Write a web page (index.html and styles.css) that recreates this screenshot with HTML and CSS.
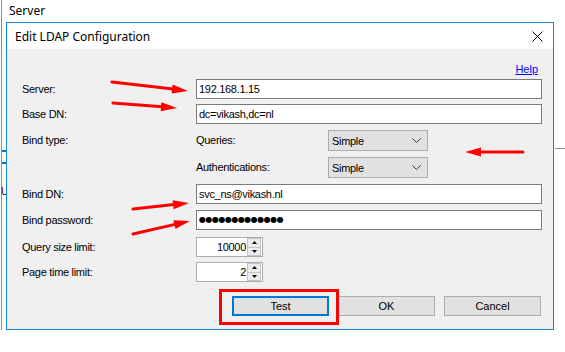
FILE: index.html
```html
<!DOCTYPE html>
<html lang="en">
<head>
  <meta charset="UTF-8" />
  <title>Edit LDAP Configuration</title>
  <link rel="stylesheet" href="styles.css">
</head>
<body>
  <div class="desk">

    <!-- window behind the dialog -->
    <div class="back-window">
      <div class="back-title">Server</div>
      <div class="back-focus"></div>
      <div class="back-letter">U</div>
    </div>
    <div class="back-rule"></div>

    <div class="dialog">
      <div class="titlebar">
        <span class="title">Edit LDAP Configuration</span>
        <svg class="close" width="11" height="11" viewBox="0 0 11 11">
          <path d="M0.5 0.5L10.5 10.5M10.5 0.5L0.5 10.5" stroke="#000" stroke-width="1" fill="none"/>
        </svg>
      </div>

      <div class="dialog-body">
        <div class="help-row"><a href="#">Help</a></div>

        <div class="form">
          <label>Server:</label>
          <div class="field">192.168.1.15</div>

          <label>Base DN:</label>
          <div class="field">dc=vikash,dc=nl</div>

          <label>Bind type:</label>
          <label class="sub">Queries:</label>
          <div class="combo">Simple
            <svg width="9" height="5" viewBox="0 0 9 5"><path d="M0.5 0.5L4.5 4.5L8.5 0.5" stroke="#333" fill="none"/></svg>
          </div>

          <label class="sub">Authentications:</label>
          <div class="combo">Simple
            <svg width="9" height="5" viewBox="0 0 9 5"><path d="M0.5 0.5L4.5 4.5L8.5 0.5" stroke="#333" fill="none"/></svg>
          </div>

          <label>Bind DN:</label>
          <div class="field">svc_ns@vikash.nl</div>

          <label>Bind password:</label>
          <div class="field password">●●●●●●●●●●●●●</div>

          <label>Query size limit:</label>
          <div class="spin">
            <span class="spin-value">10000</span>
            <span class="spin-buttons">
              <span class="spin-btn"><svg width="5" height="3" viewBox="0 0 5 3"><path d="M2.5 0L5 3H0Z" fill="#000"/></svg></span>
              <span class="spin-btn"><svg width="5" height="3" viewBox="0 0 5 3"><path d="M0 0H5L2.5 3Z" fill="#000"/></svg></span>
            </span>
          </div>

          <label>Page time limit:</label>
          <div class="spin">
            <span class="spin-value">2</span>
            <span class="spin-buttons">
              <span class="spin-btn"><svg width="5" height="3" viewBox="0 0 5 3"><path d="M2.5 0L5 3H0Z" fill="#000"/></svg></span>
              <span class="spin-btn"><svg width="5" height="3" viewBox="0 0 5 3"><path d="M0 0H5L2.5 3Z" fill="#000"/></svg></span>
            </span>
          </div>
        </div>

        <div class="buttons">
          <button class="focused">Test</button>
          <button>OK</button>
          <button>Cancel</button>
        </div>
      </div>
    </div>

    <!-- annotations drawn over the screenshot -->
    <div class="highlight"></div>
    <svg class="arrows" width="565" height="352" viewBox="0 0 565 352">
      <g stroke="#ff0000" stroke-width="3" stroke-linecap="round" fill="#ff0000">
        <line x1="112" y1="82" x2="173" y2="89.1"/>
        <polygon points="188,91 171.6,93.6 172.6,84.6" stroke="none"/>

        <line x1="113" y1="103" x2="162" y2="106.8"/>
        <polygon points="177,108 160.7,111.2 161.4,102.3" stroke="none"/>

        <line x1="523" y1="152" x2="480" y2="152"/>
        <polygon points="465,152 481,156.5 481,147.5" stroke="none"/>

        <line x1="133" y1="209" x2="174" y2="204.6"/>
        <polygon points="189,203 173.6,209.2 172.6,200.2" stroke="none"/>

        <line x1="133" y1="234" x2="175" y2="224.4"/>
        <polygon points="190,221 175.4,229 173.4,220.2" stroke="none"/>
      </g>
    </svg>

  </div>
</body>
</html>
```

FILE: styles.css
```css
/* Reset & Base */
* { box-sizing: border-box; margin: 0; padding: 0; }
body {
  background: #fff;
  color: #000;
  font-family: 'Liberation Sans', Arial, sans-serif;
  font-size: 11px;
}
.desk {
  position: relative;
  width: 565px;
  height: 352px;
  overflow: hidden;
}

/* Window behind */
.back-window {
  position: absolute;
  left: 1px;
  top: 0;
  width: 600px;
  height: 330px;
  border-left: 1px solid #8c8c8c;
}
.back-title {
  padding: 3px 0 0 7px;
  font-family: 'Noto Sans', sans-serif;
  font-size: 12px;
  line-height: 16px;
}
.back-focus {
  position: absolute;
  left: 0;
  top: 150px;
  width: 6px;
  height: 14px;
  border: 2px solid #0078d7;
  border-left: none;
}
.back-letter {
  position: absolute;
  left: -1px;
  top: 185px;
  color: #1e1e50;
}
.back-rule {
  position: absolute;
  left: 555px;
  top: 148px;
  width: 10px;
  border-top: 1px solid #8c8c8c;
}

/* Dialog */
.dialog {
  position: absolute;
  left: 6px;
  top: 22px;
  width: 548px;
  height: 308px;
  border: 1px solid #1883d7;
  display: flex;
  flex-direction: column;
}
.titlebar {
  height: 26px;
  background: #fff;
  display: flex;
  align-items: center;
  justify-content: space-between;
  padding: 0 10px 0 8px;
}
.title {
  font-family: 'Noto Sans', sans-serif;
  font-size: 12px;
}
.close { display: block; }

.dialog-body {
  flex: 1;
  background: #f0f0f0;
  padding: 13px 12px 0 15px;
}
.help-row {
  text-align: right;
  line-height: 14px;
  padding-right: 3px;
}
.help-row a {
  color: #0000ff;
  text-decoration: underline;
}

/* Form grid */
.form {
  margin-top: 3px;
  display: grid;
  grid-template-columns: 174px 132px 214px;
  grid-template-rows: 25px 26px 27px 27px 26px 27px 25px 21px;
  letter-spacing: -0.3px;
}
.form label {
  grid-column: 1;
  line-height: 20px;
  height: 20px;
}
.form .sub {
  grid-column: 2;
  line-height: 21px;
}
.field {
  grid-column: 2 / 4;
  height: 20px;
  background: #fff;
  border: 1px solid #7a7a7a;
  padding-left: 2px;
  line-height: 18px;
}
.field.password {
  font-family: 'DejaVu Sans', sans-serif;
  font-size: 8px;
  letter-spacing: -0.5px;
}
.combo {
  width: 100px;
  height: 21px;
  background: #e1e1e1;
  border: 1px solid #adadad;
  padding: 0 6px 0 3px;
  display: flex;
  align-items: center;
  justify-content: space-between;
}

/* Numeric up-down */
.spin {
  grid-column: 2;
  width: 67px;
  height: 20px;
  background: #fff;
  border: 1px solid #adadad;
  display: flex;
}
.spin-value {
  flex: 1;
  text-align: right;
  line-height: 18px;
  padding-right: 1px;
}
.spin-buttons {
  width: 15px;
  display: flex;
  flex-direction: column;
  padding: 0 1px 0 0;
}
.spin-btn {
  flex: 1;
  background: #ececec;
  border: 1px solid #c4c4c4;
  display: flex;
  align-items: center;
  justify-content: center;
}
.spin-btn + .spin-btn { border-top: none; }
.spin-btn svg { display: block; }

/* Buttons */
.buttons {
  margin-top: 13px;
  display: flex;
  justify-content: flex-end;
  gap: 9px;
}
.buttons button {
  width: 97px;
  height: 20px;
  background: #e1e1e1;
  border: 1px solid #adadad;
  font: inherit;
  color: #000;
}
.buttons button.focused {
  border: 2px solid #0078d7;
}

/* Annotations */
.highlight {
  position: absolute;
  left: 219px;
  top: 289px;
  width: 120px;
  height: 36px;
  border: 3px solid #ff0000;
}
.arrows {
  position: absolute;
  left: 0;
  top: 0;
  pointer-events: none;
}
```
